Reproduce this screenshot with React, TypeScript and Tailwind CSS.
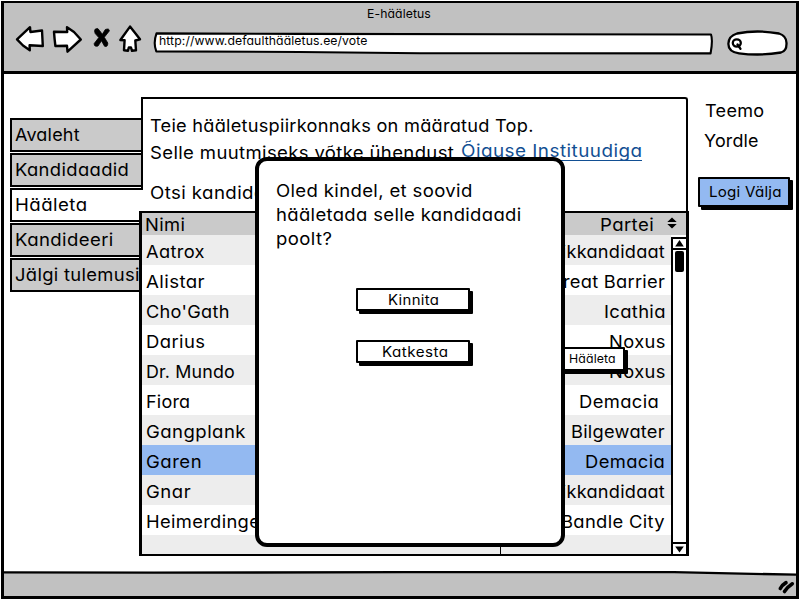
import { useLayoutEffect, useRef, useState } from "react";
import type { ReactNode } from "react";

// Text that spans exactly `w` pixels: part of the slack widens the glyphs,
// the rest goes between them.
function Fit({ w, children, className = "" }: { w: number; children: string; className?: string }) {
  const ref = useRef<HTMLSpanElement>(null);
  const [fit, setFit] = useState({ tracking: 0, scale: 1 });
  useLayoutEffect(() => {
    const measure = () => {
      const el = ref.current;
      if (!el) return;
      el.style.letterSpacing = "0px";
      const natural = el.offsetWidth;
      const target = w + 1;
      const scale = 1 + (target / natural - 1) * 0.6;
      const tracking = (target / scale - natural) / (children.length - 1);
      el.style.letterSpacing = tracking + "px";
      setFit({ tracking, scale });
    };
    measure();
    document.fonts?.ready.then(measure);
  }, [w, children]);
  return (
    <span className={"inline-block whitespace-nowrap " + className} style={{ width: w }}>
      <span
        ref={ref}
        className="-ml-[1.3px] inline-block origin-left"
        style={{ letterSpacing: fit.tracking, transform: `scaleX(${fit.scale})` }}
      >
        {children}
      </span>
    </span>
  );
}

function SketchButton({ children, className = "" }: { children: ReactNode; className?: string }) {
  return (
    <button
      className={
        "flex items-center justify-center rounded-[1px] border-2 border-black shadow-[3px_3px_0_#000] " + className
      }
    >
      {children}
    </button>
  );
}

const tabs = [
  { label: "Avaleht", w: 64 },
  { label: "Kandidaadid", w: 113 },
  { label: "Hääleta", w: 71, active: true },
  { label: "Kandideeri", w: 97 },
  { label: "Jälgi tulemusi", w: 124 },
];

const rows = [
  { name: "Aatrox", w: 57, party: "Üksikkandidaat", pw: 136 },
  { name: "Alistar", w: 58, party: "Great Barrier", pw: 115 },
  { name: "Cho'Gath", w: 82, party: "Icathia", pw: 60 },
  { name: "Darius", w: 58, party: "Noxus", pw: 55 },
  { name: "Dr. Mundo", w: 88, party: "Noxus", pw: 55 },
  { name: "Fiora", w: 43, party: "Demacia", pw: 79, inset: true },
  { name: "Gangplank", w: 98, party: "Bilgewater", pw: 93 },
  { name: "Garen", w: 55, party: "Demacia", pw: 79, selected: true },
  { name: "Gnar", w: 44, party: "Üksikkandidaat", pw: 136 },
  { name: "Heimerdinger", w: 120, party: "Bandle City", pw: 103 },
];

function Toolbar() {
  return (
    <header className="flex h-[71px] flex-col border-b-[3px] border-black bg-[#c1c1c1]">
      <div className="flex h-[21px] items-center justify-center text-[12px] leading-[20px]">
        <Fit w={63}>E-hääletus</Fit>
      </div>
      <nav className="flex h-[32px] pl-[10px]">
        <svg className="h-8 w-8" viewBox="14 22 32 32" fill="#fff" stroke="#000" strokeWidth="2.4" strokeLinejoin="round">
          <path d="M17 37.3 L30 25.2 L30.4 30 L42 28.5 L42.8 44 L29.6 43.2 L29.8 48.2 L23 43.5 Z" />
        </svg>
        <svg className="ml-1 h-8 w-[34px]" viewBox="50 22 34 32" fill="#fff" stroke="#000" strokeWidth="2.4" strokeLinejoin="round">
          <path d="M54 29.8 L67.2 30 L67 25.2 L74 30 L80.8 37.5 L67.5 49.7 L67 43.8 L55.4 44 Q54.5 37 54 29.8 Z" />
        </svg>
        <svg className="ml-[6px] h-8 w-[22px]" viewBox="90 22 22 32" fill="#000" stroke="#000" strokeWidth="0.8" strokeLinejoin="round">
          <path d="M95 27.3 Q98 25 99.5 28.5 L102.3 32.3 L105.3 27.5 Q109.5 26 109.3 29 L104.3 35.3 L107.8 41 Q107.8 45.5 104.5 44.2 L101.5 38.8 L98 44 Q94 45.2 94.2 41.5 L98.8 35.6 L95.2 31.5 Q94 29 95 27.3 Z" />
        </svg>
        <svg className="ml-[5px] h-8 w-[26px]" viewBox="117 22 26 32" fill="#fff" stroke="#000" strokeWidth="2.4" strokeLinejoin="round">
          <path d="M130 24.6 L140 37.3 L135.3 38.5 L136 48.3 L132 48.8 L131 45.5 L128.8 45.5 L128 48.8 L124 48.2 L124.6 38.3 L120.4 38 Z" />
        </svg>
        <div className="relative ml-[9px] w-[563px]">
          <svg className="absolute inset-0 h-8 w-[563px]" viewBox="152 22 563 32" fill="#fff" stroke="#000" strokeWidth="2.1" strokeLinejoin="round">
            <path d="M156.5 31.4 L300 31.9 L711 32.5 Q713 38 710.6 51.4 L420 51.2 L300 50 L156.3 49.4 Q153 41 156.5 31.4 Z" />
          </svg>
          <div className="relative flex pl-[8px] pt-[7px] text-[12px] leading-[20px]">
            <Fit w={207}>http://www.defaulthääletus.ee/vote</Fit>
          </div>
        </div>
        <svg className="ml-[10px] h-8 w-[65px]" viewBox="725 22 65 32" fill="#fff" stroke="#000" strokeWidth="2.3" strokeLinecap="round">
          <path d="M737 31.5 Q757 27.5 779 31.5 Q787 34 786.5 42 Q786.5 49 781 50.5 Q760 54 739 51.3 Q728 50 728.4 41.5 Q728.7 34 737 31.5 Z" />
          <ellipse cx="736.8" cy="41" rx="4" ry="3.6" />
          <path d="M737.5 42.5 L740.5 46.8" />
        </svg>
      </nav>
    </header>
  );
}

function Table() {
  return (
    <div className="relative z-20 flex h-[345px] flex-col border-y-2 border-l-[3px] border-r-[3px] border-black bg-white">
      <div className="flex h-[22px] bg-[#cacaca] leading-[24px]">
        <div className="w-[358px] border-r border-black pl-1">
          <Fit w={39}>Nimi</Fit>
        </div>
        <div className="flex flex-1 justify-end pr-[9px]">
          <Fit w={53}>Partei</Fit>
          <svg className="ml-[13px] mt-[4px] h-[12px] w-[10px]" viewBox="0 0 10 12">
            <path d="M5 0.5 L9.7 5 H0.3 Z M5 11.5 L9.7 7 H0.3 Z" />
          </svg>
        </div>
      </div>
      <div className="flex min-h-0 flex-1">
        <div className="flex w-[529px] flex-col overflow-hidden">
          {rows.map((r, i) => (
            <div
              key={r.name}
              className={
                "flex h-[30px] shrink-0 leading-[34px] " +
                (r.selected ? "bg-[#93b9f1]" : i % 2 === 0 ? "bg-[#ededed]" : "bg-white")
              }
            >
              <div className="w-[358px] border-r border-black pl-[5px]">
                <Fit w={r.w}>{r.name}</Fit>
              </div>
              <div className={"flex flex-1 justify-end " + (r.inset ? "pr-[12px]" : "pr-[6px]")}>
                <Fit w={r.pw}>{r.party}</Fit>
              </div>
            </div>
          ))}
          <div className="flex flex-1 bg-[#ededed]">
            <div className="w-[359px] border-r border-black" />
          </div>
        </div>
        <div className="mt-[2px] flex flex-1 flex-col items-center border-l-2 border-t-2 border-black">
          <div className="flex h-[11px] w-full items-center justify-center border-b-2 border-black">
            <svg className="h-[7px] w-[9px]" viewBox="0 0 9 7">
              <path d="M4.5 0 L8.8 6.5 H0.2 Z" />
            </svg>
          </div>
          <div className="mt-px h-[21px] w-[9px] rounded-[2px] bg-black" />
          <div className="mt-auto flex h-[12px] w-full items-center justify-center border-t-2 border-black">
            <svg className="h-[7px] w-[9px]" viewBox="0 0 9 7">
              <path d="M4.5 6.5 L8.8 0.5 H0.2 Z" />
            </svg>
          </div>
        </div>
      </div>
    </div>
  );
}

export default function App() {
  return (
    <div className="relative h-[600px] w-[800px] overflow-hidden bg-white p-px font-['Inter','Liberation_Sans',sans-serif] text-[17.5px] text-black [font-feature-settings:'cv11','calt'_0]">
      <div className="flex h-[598px] flex-col border-x-[3px] border-b-[3px] border-t-2 border-black">
        <Toolbar />
        <main className="flex h-[497px]">
          <div className="relative z-10 flex w-[135px] flex-col gap-px pl-[6px] pt-[44px]">
            {tabs.map((t) => (
              <div
                key={t.label}
                className={
                  "h-[34px] border-y-[2.5px] border-l-2 border-black pl-[4px] leading-[30px] " +
                  (t.active ? "w-[133px] bg-white" : "w-[131px] bg-[#cacaca]")
                }
              >
                <Fit w={t.w}>{t.label}</Fit>
              </div>
            ))}
          </div>
          <section className="w-[550px] pt-[23px]">
            <div className="ml-[2px] mr-px flex h-[114px] flex-col rounded-tr-[3px] border-l-2 border-r-[2.5px] border-t-2 border-black pl-2 leading-[26px]">
              <div className="mt-[14px]">
                <Fit w={382}>Teie hääletuspiirkonnaks on määratud Top.</Fit>
              </div>
              <div className="flex">
                <Fit w={303} className="pt-px">
                  Selle muutmiseks võtke ühendust
                </Fit>
                <a className="ml-2 h-[22px] border-b border-[#124f93] leading-[24px] text-[#124f93]">
                  <Fit w={180}>Õiguse Instituudiga</Fit>
                </a>
              </div>
              <div className="mt-[14px]">
                <Fit w={138}>Otsi kandidaati</Fit>
              </div>
            </div>
            <Table />
          </section>
          <aside className="flex flex-1 flex-col pt-[22px]">
            <div className="pl-[17px] leading-[30px]">
              <Fit w={58}>Teemo</Fit>
            </div>
            <div className="pl-[16px] leading-[30px]">
              <Fit w={53}>Yordle</Fit>
            </div>
            <SketchButton className="ml-[9px] mt-[21px] h-[30px] w-[92px] bg-[#93b9f1] text-[14.5px]">
              <Fit w={71}>Logi Välja</Fit>
            </SketchButton>
          </aside>
        </main>
        <footer className="relative h-[25px] bg-[#c1c1c1]">
          <svg className="absolute inset-x-0 top-0 h-[6px] w-[792px]" viewBox="0 0 792 6">
            <path d="M0 0 H792 V3.6 L700 1.5 L0 1.5 Z" fill="#fff" />
            <path d="M0 1.3 L150 1.7 L400 1.2 L670 1.2 L792 3.7" fill="none" stroke="#000" strokeWidth="2.3" />
          </svg>
          <svg className="absolute bottom-0 right-0 h-[20px] w-[24px]" viewBox="772 576 24 20" fill="none" stroke="#000" strokeWidth="3.6" strokeLinecap="round">
            <path d="M780.3 588.5 Q782 585 786 582.6 M784.5 591.5 Q787.5 587 792.3 583.8" />
          </svg>
        </footer>
      </div>

      <SketchButton className="absolute left-[557px] top-[347px] z-[25] h-[24px] w-[68px] bg-white pl-[2px] text-[12px]">
        <Fit w={46}>Hääleta</Fit>
      </SketchButton>

      <div
        role="dialog"
        className="absolute left-[255px] top-[157px] z-30 flex h-[390px] w-[310px] flex-col rounded-[12px] border-4 border-black bg-white pl-[18px] pt-[18px] leading-[24px]"
      >
        <Fit w={195}>Oled kindel, et soovid</Fit>
        <Fit w={244}>hääletada selle kandidaadi</Fit>
        <Fit w={55}>poolt?</Fit>
        <SketchButton className="ml-[79px] mt-[37px] h-[23px] w-[114px] bg-white text-[14px]">
          <Fit w={50}>Kinnita</Fit>
        </SketchButton>
        <SketchButton className="ml-[79px] mt-[29px] h-[23px] w-[114px] bg-white text-[14px]">
          <Fit w={65}>Katkesta</Fit>
        </SketchButton>
      </div>
    </div>
  );
}
